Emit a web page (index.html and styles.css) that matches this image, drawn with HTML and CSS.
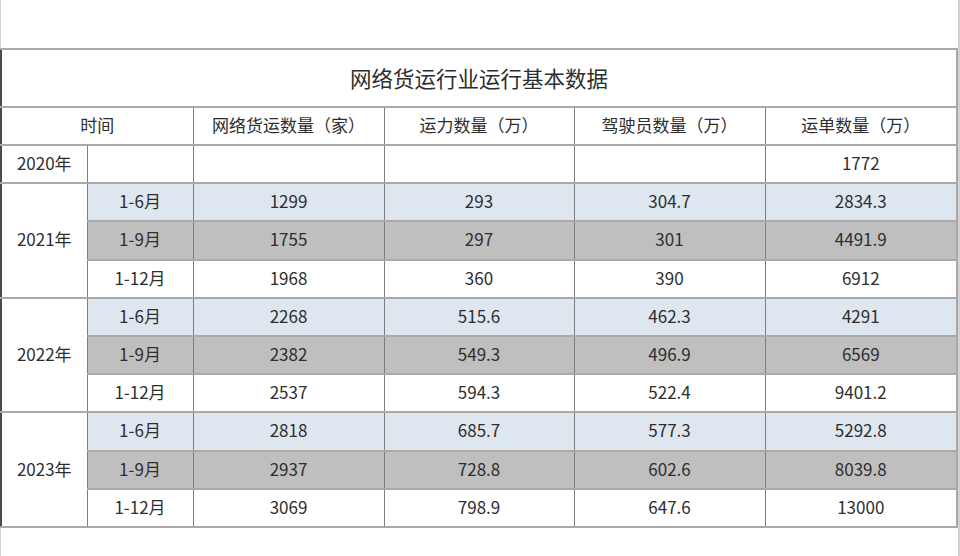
FILE: index.html
```html
<!DOCTYPE html>
<html lang="zh-CN">
<head>
<meta charset="utf-8">
<title>网络货运行业运行基本数据</title>
<link rel="stylesheet" href="styles.css">
</head>
<body>
<div class="page">
  <table class="data">
    <colgroup>
      <col class="c-year"><col class="c-month"><col class="c-wide"><col class="c-std"><col class="c-wide"><col class="c-last">
    </colgroup>
    <tr class="title-row"><td colspan="6" class="title edge">网络货运行业运行基本数据</td></tr>
    <tr class="head-row">
      <td colspan="2" class="edge">时间</td>
      <td>网络货运数量（家）</td>
      <td>运力数量（万）</td>
      <td>驾驶员数量（万）</td>
      <td>运单数量（万）</td>
    </tr>
    <tr class="row">
      <td class="edge">2020年</td><td></td><td></td><td></td><td></td><td>1772</td>
    </tr>
    <tr class="row blue">
      <td rowspan="3" class="year edge">2021年</td><td>1-6月</td><td>1299</td><td>293</td><td>304.7</td><td>2834.3</td>
    </tr>
    <tr class="row gray">
      <td>1-9月</td><td>1755</td><td>297</td><td>301</td><td>4491.9</td>
    </tr>
    <tr class="row">
      <td>1-12月</td><td>1968</td><td>360</td><td>390</td><td>6912</td>
    </tr>
    <tr class="row blue">
      <td rowspan="3" class="year edge">2022年</td><td>1-6月</td><td>2268</td><td>515.6</td><td>462.3</td><td>4291</td>
    </tr>
    <tr class="row gray">
      <td>1-9月</td><td>2382</td><td>549.3</td><td>496.9</td><td>6569</td>
    </tr>
    <tr class="row">
      <td>1-12月</td><td>2537</td><td>594.3</td><td>522.4</td><td>9401.2</td>
    </tr>
    <tr class="row blue">
      <td rowspan="3" class="year edge">2023年</td><td>1-6月</td><td>2818</td><td>685.7</td><td>577.3</td><td>5292.8</td>
    </tr>
    <tr class="row gray">
      <td>1-9月</td><td>2937</td><td>728.8</td><td>602.6</td><td>8039.8</td>
    </tr>
    <tr class="row">
      <td>1-12月</td><td>3069</td><td>798.9</td><td>647.6</td><td>13000</td>
    </tr>
  </table>
</div>
</body>
</html>
```
FILE: styles.css
```css
html, body {
  margin: 0;
  padding: 0;
  background: #ffffff;
}
.page {
  box-sizing: border-box;
  width: 960px;
  height: 556px;
  padding-top: 48px;
  border-left: 1px solid #d6d6d6;
  border-right: 2px solid #d2d2d2;
  font-family: "Noto Sans CJK SC", "Noto Sans", sans-serif;
  color: #2e2e2e;
}
.data {
  border-collapse: collapse;
  table-layout: fixed;
  width: 956px;
  margin-left: -1px;
}
.c-year { width: 86px; }
.c-month { width: 106px; }
.c-wide { width: 191px; }
.c-std { width: 190px; }
.c-last { width: 192px; }
.data td {
  border-top: 2px solid #a9a9a9;
  border-bottom: 2px solid #a9a9a9;
  border-left: 1px solid #7d7d7d;
  border-right: 1px solid #7d7d7d;
  text-align: center;
  vertical-align: middle;
  font-size: 17px;
  padding: 0 0 2px 0;
  line-height: 20px;
}
.data td.edge {
  border-left: 2px solid #4a4a4a;
}
.data td:last-child {
  border-right: 2px solid #a9a9a9;
}
.data td.title {
  font-size: 21.5px;
  padding-bottom: 1px;
}
.title-row { height: 58px; }
.head-row { height: 38px; }
.row { height: 38.2px; }
.row.blue td { background: #dee6f0; }
.row.gray td { background: #bfbfbf; }
.row td.year { background: #ffffff; }
```
